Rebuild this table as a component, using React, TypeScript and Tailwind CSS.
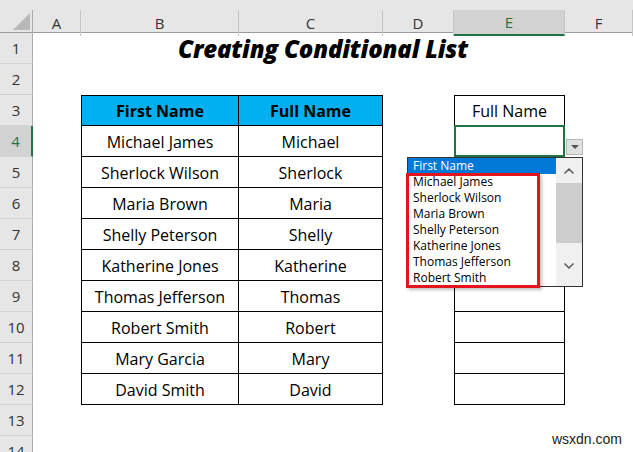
import { ChevronUp, ChevronDown } from 'lucide-react'

const names: [string, string][] = [
  ['Michael James', 'Michael'],
  ['Sherlock Wilson', 'Sherlock'],
  ['Maria Brown', 'Maria'],
  ['Shelly Peterson', 'Shelly'],
  ['Katherine Jones', 'Katherine'],
  ['Thomas Jefferson', 'Thomas'],
  ['Robert Smith', 'Robert'],
  ['Mary Garcia', 'Mary'],
  ['David Smith', 'David'],
]

const listItems = names.slice(0, 7).map((n) => n[0])

const cols = ['A', 'B', 'C', 'D', 'E', 'F']
const rows = Array.from({ length: 14 }, (_, i) => i + 1)

function RowHeader({ r }: { r: number }) {
  return r === 4 ? (
    <div className="flex items-center justify-center bg-[#d2d2d2] border-b border-[#d4d4d4] border-r-2 border-r-[#217346] text-[#217346] text-[15px]">
      {r}
    </div>
  ) : (
    <div className="flex items-center justify-center bg-[#e6e6e6] border-b border-[#d4d4d4] border-r border-r-[#ababab] text-[#333] text-[15px]">
      {r}
    </div>
  )
}

function Dropdown() {
  return (
    <>
      {/* selected cell outline */}
      <div className="absolute -left-px -top-px -right-px -bottom-px border-2 border-[#217346] pointer-events-none" />
      {/* dropdown button */}
      <div className="absolute left-[111px] top-[13px] w-[17px] h-[16px] bg-[#e1e1e1] border border-[#b5b5b5] flex items-center justify-center">
        <div className="w-0 h-0 border-l-[4px] border-r-[4px] border-t-[4px] border-l-transparent border-r-transparent border-t-[#555]" />
      </div>
      {/* list box */}
      <div className="absolute left-[-48px] top-[31px] w-[176px] h-[130px] bg-white border border-[#333] flex z-10 font-['Open_Sans'] text-[12px] leading-[16px] text-black">
        <div className="flex-1 flex flex-col">
          <div className="bg-[#0078d7] text-white pl-[5px] h-[16px]">First Name</div>
          {listItems.map((n) => (
            <div key={n} className="pl-[5px] h-[16px]">
              {n}
            </div>
          ))}
        </div>
        <div className="w-[26px] bg-[#f0f0f0] flex flex-col items-center">
          <div className="h-[25px] flex items-center justify-center text-[#606060]">
            <ChevronUp size={16} strokeWidth={2.5} />
          </div>
          <div className="w-full h-[60px] bg-[#cdcdcd]" />
          <div className="flex-1" />
          <div className="h-[28px] flex items-start justify-center text-[#606060]">
            <ChevronDown size={16} strokeWidth={2.5} />
          </div>
        </div>
        {/* highlight box */}
        <div className="absolute left-[-2px] top-[15px] w-[134px] h-[115px] border-[3px] border-[#e3141b] shadow-[2px_2px_3px_rgba(0,0,0,0.25)]" />
      </div>
    </>
  )
}

export default function App() {
  return (
    <div className="w-[633px] h-[452px] overflow-hidden bg-white relative font-['Open_Sans'] text-black">
      <div className="h-[10px] bg-[#e6e6e6]" />
      {/* column headers */}
      <div className="grid grid-cols-[33px_48px_158px_144px_71px_111px_1fr] h-[23px] bg-[#e6e6e6] border-b border-[#9b9b9b]">
        <div className="border-r border-[#ababab] relative">
          <svg className="absolute left-[13px] top-[3px]" width="17" height="17" viewBox="0 0 17 17">
            <polygon points="17,0 17,17 0,17" fill="#b8b8b8" />
          </svg>
        </div>
        {cols.map((c) =>
          c === 'E' ? (
            <div key={c} className="flex items-center justify-center bg-[#d2d2d2] border-r border-[#c6c6c6] border-b-2 border-b-[#217346] text-[#217346] text-[15px] pt-[1px]">
              {c}
            </div>
          ) : (
            <div key={c} className="flex items-center justify-center border-r border-[#c6c6c6] text-[#333] text-[15px]">
              {c}
            </div>
          )
        )}
      </div>
      {/* sheet */}
      <div className="grid grid-cols-[33px_48px_158px_144px_71px_111px_1fr] auto-rows-[31px] text-[16px]">
        {rows.map((r) => {
          const inTable = r >= 3 && r <= 12
          const row = r >= 4 && r <= 12 ? names[r - 4] : null
          return [
            <RowHeader key={`h${r}`} r={r} />,
            <div key={`a${r}`} />,
            r === 1 ? (
              <div key={`b${r}`} className="col-span-4 flex items-center justify-center font-extrabold italic text-[24px] tracking-[-0.2px] pt-[1px]">
                Creating Conditional List
              </div>
            ) : r === 3 ? (
              <div key={`b${r}`} className="flex items-center justify-center border border-black bg-[#00b0f0] font-bold pt-[1px]">
                First Name
              </div>
            ) : inTable ? (
              <div key={`b${r}`} className="flex items-center justify-center border-l border-r border-b border-black pt-[1px]">
                {row?.[0]}
              </div>
            ) : (
              <div key={`b${r}`} />
            ),
            r === 1 ? null : r === 3 ? (
              <div key={`c${r}`} className="flex items-center justify-center border-t border-r border-b border-black bg-[#00b0f0] font-bold pt-[1px]">
                Full Name
              </div>
            ) : inTable ? (
              <div key={`c${r}`} className="flex items-center justify-center border-r border-b border-black pt-[1px]">
                {row?.[1]}
              </div>
            ) : (
              <div key={`c${r}`} />
            ),
            r === 1 ? null : <div key={`d${r}`} />,
            r === 1 ? null : r === 3 ? (
              <div key={`e${r}`} className="flex items-center justify-center border border-black pt-[1px]">
                Full Name
              </div>
            ) : r === 4 ? (
              <div key={`e${r}`} className="relative border-l border-r border-b border-black">
                <Dropdown />
              </div>
            ) : inTable ? (
              <div key={`e${r}`} className="border-l border-r border-b border-black" />
            ) : (
              <div key={`e${r}`} />
            ),
            <div key={`f${r}`} />,
          ]
        })}
      </div>
      <div className="absolute right-[11px] bottom-[2px] font-['Liberation_Sans'] text-[14px] text-[#222]">
        wsxdn.com
      </div>
    </div>
  )
}
